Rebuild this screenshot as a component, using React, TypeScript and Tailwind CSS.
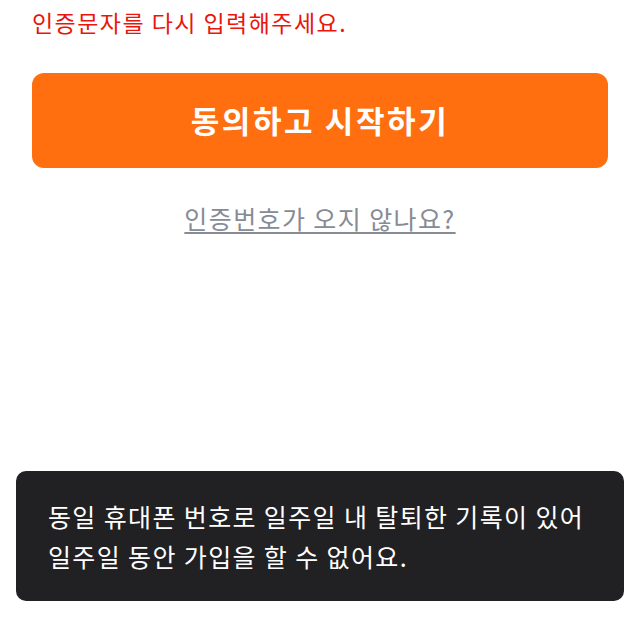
export default function App() {
  return (
    <div
      className="relative min-h-[617px] bg-white"
      style={{ fontFamily: '"Noto Sans CJK KR", "Noto Sans", sans-serif' }}
    >
      <main className="px-8 pt-[5px]">
        {/* Error message */}
        <p className="text-[23px] leading-[34px] tracking-[1.45px] text-[#e8160c]">
          인증문자를 다시 입력해주세요.
        </p>

        {/* Submit */}
        <button className="mt-[34px] flex h-[95px] w-full items-center justify-center rounded-xl bg-[#ff6f0f] text-[31px] font-bold tracking-[2.6px] text-white">
          동의하고 시작하기
        </button>

        <div className="mt-[32px] flex justify-center">
          <a className="text-[25px] leading-[36px] tracking-[1.4px] text-[#868b94] underline underline-offset-[3px]">
            인증번호가 오지 않나요?
          </a>
        </div>
      </main>

      {/* Toast */}
      <div className="fixed bottom-4 left-4 right-4 rounded-[10px] bg-[#212124] px-8 py-[25px]">
        <p className="text-[25px] leading-[40px] tracking-[1.37px] text-white">
          동일 휴대폰 번호로 일주일 내 탈퇴한 기록이 있어
          <br />
          일주일 동안 가입을 할 수 없어요.
        </p>
      </div>
    </div>
  );
}
